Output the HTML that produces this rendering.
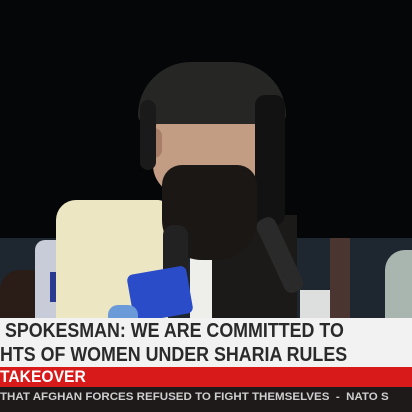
<!DOCTYPE html><html><head><style>
*{margin:0;padding:0}body{width:412px;height:412px;overflow:hidden;background:#050608;position:relative;font-family:"Liberation Sans",sans-serif}
div{position:absolute}
</style></head><body>
<div style="left:0;top:238px;width:412px;height:80px;background:#1e2630"></div>
<div style="left:330px;top:238px;width:20px;height:80px;background:#4a3530"></div>
<div style="left:385px;top:250px;width:30px;height:70px;background:#a9b6b0;border-radius:20px 0 0 0"></div>
<div style="left:0;top:270px;width:50px;height:48px;background:#2a1c16;border-radius:20px 20px 0 0"></div>
<div style="left:35px;top:240px;width:40px;height:78px;background:#c8ccd8;border-radius:10px 10px 0 0"></div>
<div style="left:50px;top:272px;width:20px;height:30px;background:#2a3a90"></div>
<div style="left:56px;top:200px;width:112px;height:118px;background:#ece6c2;border-radius:20px 10px 0 0"></div>
<div style="left:190px;top:240px;width:30px;height:78px;background:#eeeeea"></div>
<div style="left:212px;top:215px;width:85px;height:103px;background:#1c1a18"></div>
<div style="left:300px;top:290px;width:30px;height:28px;background:#dddede"></div>
<div style="left:153px;top:100px;width:108px;height:95px;background:#c39c84;border-radius:40px 40px 30px 30px"></div>
<div style="left:146px;top:128px;width:16px;height:30px;background:#a87e68;border-radius:8px"></div>
<div style="left:138px;top:62px;width:148px;height:62px;background:#262624;border-radius:60px 60px 10px 10px"></div>
<div style="left:140px;top:100px;width:16px;height:70px;background:#1a1a1a;border-radius:8px"></div>
<div style="left:255px;top:95px;width:30px;height:130px;background:#121212;border-radius:10px"></div>
<div style="left:162px;top:165px;width:95px;height:95px;background:#1a1714;border-radius:20px 20px 40px 40px"></div>
<div style="left:270px;top:215px;width:20px;height:80px;background:#2a2a2a;border-radius:8px;transform:rotate(-25deg)"></div>
<div style="left:163px;top:225px;width:25px;height:55px;background:#222;border-radius:10px"></div>
<div style="left:130px;top:270px;width:60px;height:48px;background:#2b4cc8;border-radius:6px;transform:rotate(-10deg)"></div>
<div style="left:108px;top:305px;width:30px;height:15px;background:#6a9ad8;border-radius:10px 10px 0 0"></div>
<div style="left:0;top:318px;width:412px;height:50px;background:#f2f2f2"></div>
<div style="left:0;top:319px;font-size:20.5px;line-height:24px;font-weight:bold;color:#2a2a2a;white-space:nowrap;transform:scaleX(.87);transform-origin:left">&nbsp;SPOKESMAN: WE ARE COMMITTED TO<br>HTS OF WOMEN UNDER SHARIA RULES</div>
<div style="left:0;top:367px;width:412px;height:20px;background:#d81a1a"></div>
<div style="left:0;top:367px;font-size:17px;line-height:20px;font-weight:bold;color:#fff;transform:scaleX(.92);transform-origin:left">TAKEOVER</div>
<div style="left:0;top:387px;width:412px;height:25px;background:#1e1a1a"></div>
<div style="left:0;top:390px;font-size:11px;line-height:14px;font-weight:bold;color:#cfcfcf;white-space:nowrap;transform:scaleX(1.05);transform-origin:left">THAT AFGHAN FORCES REFUSED TO FIGHT THEMSELVES &nbsp;- &nbsp;NATO S</div>
</body></html>
